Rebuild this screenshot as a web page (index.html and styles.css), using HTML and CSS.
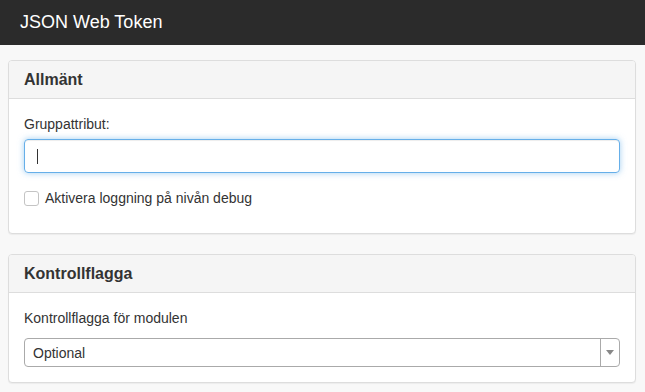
FILE: index.html
```html
<!doctype html>
<html>
<head>
  <meta charset="utf-8">
  <link rel="stylesheet" href="styles.css">
</head>
<body>
  <div class="topbar">JSON Web Token</div>

  <div class="content">
    <div class="panel">
      <div class="panel-heading">Allmänt</div>
      <div class="panel-body">
        <label class="field-label">Gruppattribut:</label>
        <div class="text-input"><span class="caret"></span></div>
        <div class="check-row">
          <span class="checkbox"></span>
          <span>Aktivera loggning på nivån debug</span>
        </div>
      </div>
    </div>

    <div class="panel">
      <div class="panel-heading">Kontrollflagga</div>
      <div class="panel-body">
        <label class="field-label spaced">Kontrollflagga för modulen</label>
        <div class="select-box">
          <span class="select-value">Optional</span>
          <span class="select-arrow"><span class="triangle"></span></span>
        </div>
      </div>
    </div>
  </div>
</body>
</html>
```

FILE: styles.css
```css
body{
  margin: 0;
  background-color: #f8f8f8;
  font-family: "Liberation Sans", Arial, sans-serif;
  font-size: 14px;
  color: #333333;
}
.topbar{
  height: 45px;
  line-height: 45px;
  background-color: #2b2b2b;
  color: #ffffff;
  font-size: 18px;
  padding-left: 20px;
}
.content{
  padding: 15px 9px 0 8px;
}
.panel{
  background-color: #ffffff;
  border: 1px solid #dddddd;
  border-radius: 4px;
  box-shadow: 0 1px 1px rgba(0,0,0,0.05);
  margin-bottom: 20px;
}
.panel-heading{
  background-color: #f5f5f5;
  border-bottom: 1px solid #dddddd;
  border-radius: 3px 3px 0 0;
  padding: 10px 15px;
  font-size: 16px;
  font-weight: bold;
  line-height: 17px;
}
.panel-body{
  padding: 15px;
}
.field-label{
  display: block;
  line-height: 20px;
  margin-bottom: 5px;
}
.field-label.spaced{
  margin-bottom: 10px;
}
.text-input{
  height: 32px;
  border: 1px solid #66afe9;
  border-radius: 4px;
  box-shadow: inset 0 1px 1px rgba(0,0,0,0.075), 0 0 6px rgba(102,175,233,0.6);
  display: flex;
  align-items: center;
  padding-left: 12px;
}
.caret{
  width: 1px;
  height: 15px;
  background-color: #333333;
}
.check-row{
  display: flex;
  align-items: center;
  margin-top: 15px;
  margin-bottom: 10px;
  line-height: 20px;
}
.checkbox{
  width: 13px;
  height: 13px;
  border: 1px solid #c4c4c4;
  border-radius: 3px;
  margin-right: 6px;
  background-color: #ffffff;
}
.select-box{
  height: 27px;
  border: 1px solid #aaaaaa;
  border-radius: 4px;
  display: flex;
  align-items: center;
}
.select-value{
  flex: 1;
  padding-left: 8px;
}
.select-arrow{
  width: 18px;
  height: 100%;
  border-left: 1px solid #aaaaaa;
  display: flex;
  align-items: center;
  justify-content: center;
}
.triangle{
  width: 0;
  height: 0;
  border-left: 4px solid transparent;
  border-right: 4px solid transparent;
  border-top: 5px solid #888888;
}
```
